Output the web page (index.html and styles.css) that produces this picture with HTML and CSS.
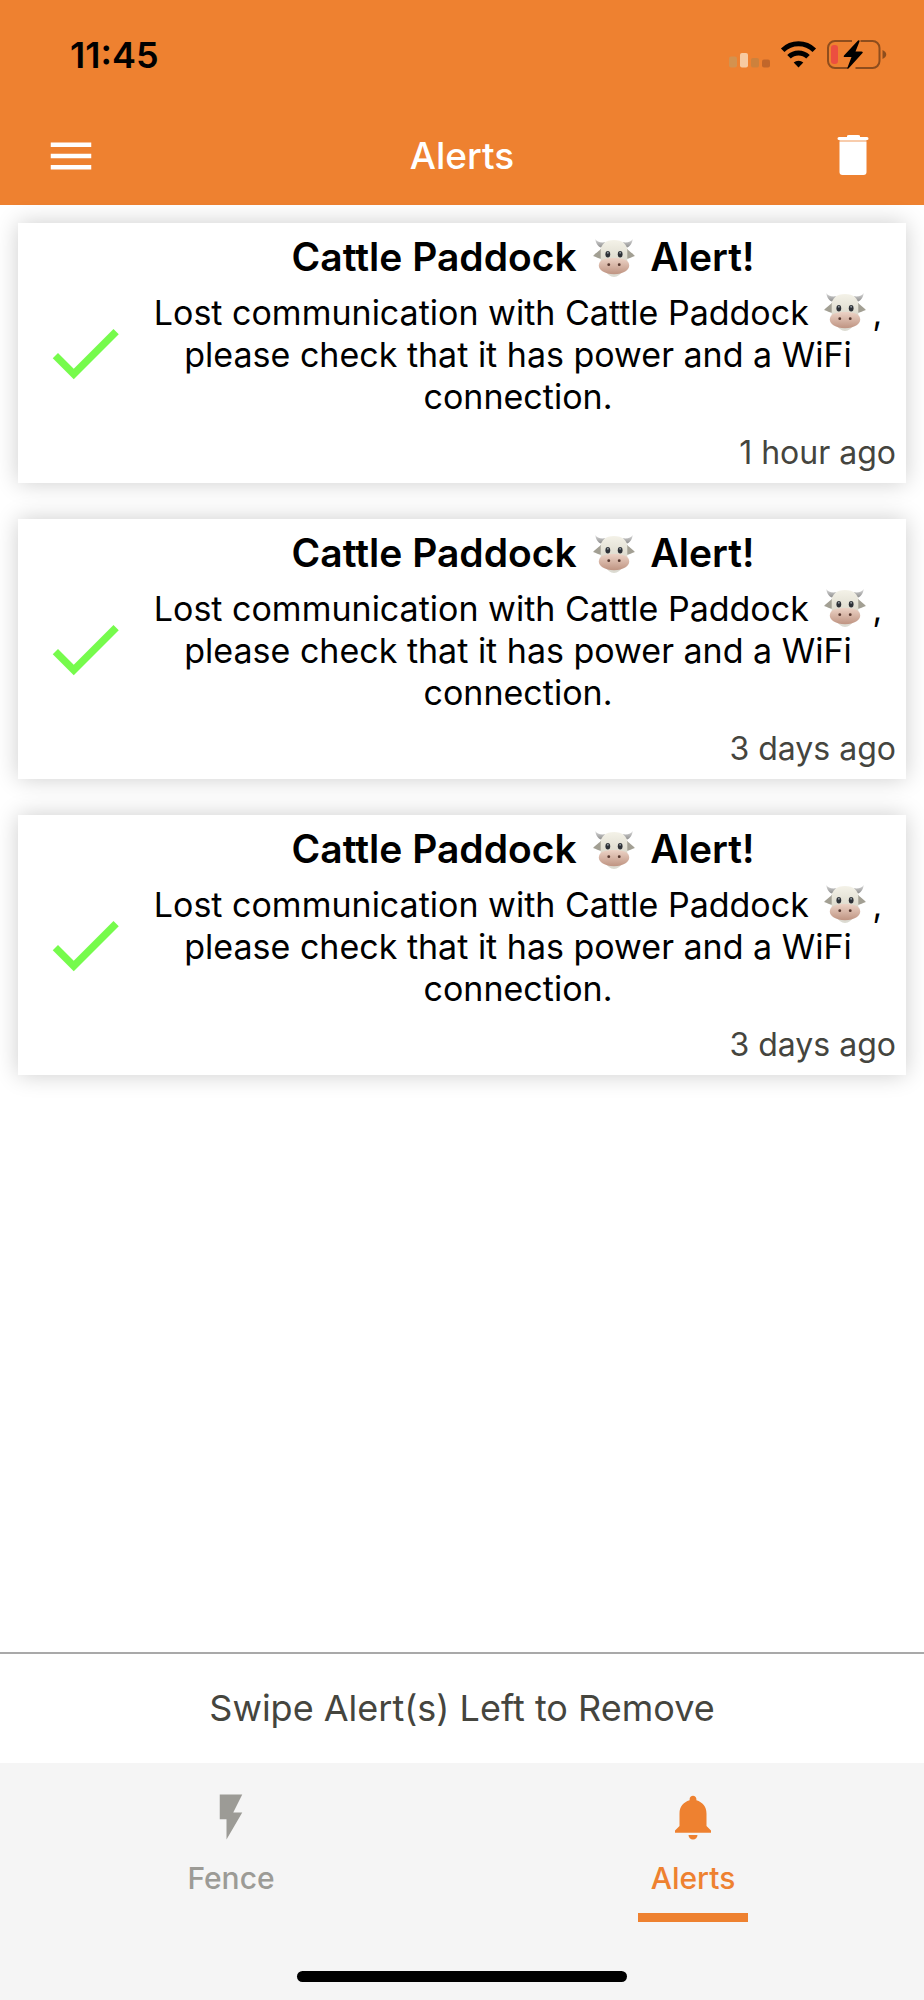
FILE: index.html
```
<!DOCTYPE html>
<html lang="en">
<head>
    <meta charset="UTF-8">
    <meta name="viewport" content="width=device-width, initial-scale=1.0">
    <title>Alerts</title>
    <link rel="stylesheet" href="styles.css">
</head>
<body>

<!-- Shared icons -->
<svg class="sprite" aria-hidden="true">
    <defs>
        <linearGradient id="cowFace" x1="0" y1="0" x2="0" y2="1">
            <stop offset="0" stop-color="#f4f2e8"/>
            <stop offset="1" stop-color="#dcd9cc"/>
        </linearGradient>
        <linearGradient id="cowNose" x1="0" y1="0" x2="0" y2="1">
            <stop offset="0" stop-color="#ecd3c6"/>
            <stop offset="1" stop-color="#bf9482"/>
        </linearGradient>
        <linearGradient id="cowHorn" x1="0" y1="0" x2="0" y2="1">
            <stop offset="0" stop-color="#dadada"/>
            <stop offset="1" stop-color="#8e8e8e"/>
        </linearGradient>
    </defs>
    <symbol id="cow" viewBox="0 0 44 40">
        <path d="M2.500 0c1 3 5 4 10 3.500l1 3L8 9C5 7.500 2.500 4 2.500 0z" fill="url(#cowHorn)"/>
        <path d="M41.500 0c-1 3-5 4-10 3.500l-1 3L36 9c3-1.500 5.500-5 5.500-9z" fill="url(#cowHorn)"/>
        <path d="M9 9C7 13 3 14 0 18c3 1 6 3 9 3z" fill="#a29f93"/>
        <path d="M35 9c2 4 6 5 9 9-3 1-6 3-9 3z" fill="#a29f93"/>
        <path d="M13 33q3 7 9 7t9-7z" fill="#dcdbd2"/>
        <path d="M22 1C13 1 8 6 8 12v12h28V12C36 6 31 1 22 1z" fill="url(#cowFace)"/>
        <ellipse cx="15.500" cy="16" rx="2.500" ry="3.500" fill="#2c3036"/>
        <ellipse cx="28.500" cy="16" rx="2.500" ry="3.500" fill="#2c3036"/>
        <circle cx="15.500" cy="14.500" r="1" fill="#8f979c"/>
        <circle cx="28.500" cy="14.500" r="1" fill="#8f979c"/>
        <path d="M22 20c-10 0-16 2-16 8 0 5 6 9 16 9s16-4 16-9c0-6-6-8-16-8z" fill="url(#cowNose)"/>
        <circle cx="16.500" cy="27" r="1.500" fill="#57382f"/>
        <circle cx="27.500" cy="27" r="1.500" fill="#57382f"/>
    </symbol>
    <symbol id="check" viewBox="0 0 24 24">
        <path d="M9 16.200L4.800 12l-1.400 1.400L9 19 21 7l-1.400-1.400L9 16.200z"/>
    </symbol>
</svg>

<header class="header">
    <div class="status-bar">
        <span class="clock">11:45</span>
        <svg class="status-icons" viewBox="0 0 160 32" aria-hidden="true">
            <rect x="1" y="17.500" width="8" height="11" rx="2" fill="#d3924f"/>
            <rect x="12" y="14" width="8" height="14.500" rx="2" fill="#f7cba2"/>
            <rect x="23" y="19" width="8" height="9.500" rx="2" fill="#cd813c"/>
            <rect x="34" y="20.500" width="8" height="8" rx="2" fill="#c1662a"/>
            <g fill="none" stroke="#000" stroke-width="5">
                <path d="M54.700 11.200a22.500 22.500 0 0 1 31.600 0"/>
                <path d="M61 17.800a13.500 13.500 0 0 1 19 0"/>
            </g>
            <path d="M70.500 28.500l-4.800-4.900a7 7 0 0 1 9.600 0z" fill="#000"/>
            <path d="M124 2h-17a7 7 0 0 0-7 7v13a7 7 0 0 0 7 7h13M132.500 2h12a7 7 0 0 1 7 7v13a7 7 0 0 1-7 7h-17" fill="none" stroke="#8e4d1d" stroke-width="2"/>
            <path d="M154.500 11c5 2 5 7 0 9z" fill="#8e4d1d"/>
            <rect x="103" y="6" width="7" height="19" rx="3" fill="#ec4f40"/>
            <path d="M130 1.500l-14 15q-1 1.500 1 1.500h6.500l-4 10.500q-.5 2 1 1l14-15.500q1-1.500-1-1.500h-6l4-10q.3-2-1.500-1z" fill="#000"/>
        </svg>
    </div>
    <div class="nav-bar">
        <button class="icon-btn" type="button" aria-label="Menu">
            <svg viewBox="0 0 24 24"><path d="M3 18h18v-2H3v2zm0-5h18v-2H3v2zm0-7v2h18V6H3z"/></svg>
        </button>
        <h1>Alerts</h1>
        <button class="icon-btn" type="button" aria-label="Delete all">
            <svg viewBox="0 0 54 54">
                <path d="M21 7q0-1 2-1h9q2 0 2 1v1h7q1.500 0 1.500 1.500T41 11H13q-1.500 0-1.500-1.500T13 8h8z"/>
                <path d="M13.500 11h27v2h-27z" opacity=".6"/>
                <path d="M13.500 13h27v30q0 3-3 3h-21q-3 0-3-3z"/>
            </svg>
        </button>
    </div>
</header>

<main class="alerts">
    <article class="card">
        <svg class="check" role="img" aria-label="Resolved"><use href="#check"/></svg>
        <div class="card-body">
            <h2>Cattle Paddock <svg class="cow" role="img" aria-label="cow"><use href="#cow"/></svg> Alert!</h2>
            <p class="message">Lost communication with Cattle Paddock <svg class="cow" role="img" aria-label="cow"><use href="#cow"/></svg>, please check that it has power and a WiFi connection.</p>
            <p class="time">1 hour ago</p>
        </div>
    </article>

    <article class="card">
        <svg class="check" role="img" aria-label="Resolved"><use href="#check"/></svg>
        <div class="card-body">
            <h2>Cattle Paddock <svg class="cow" role="img" aria-label="cow"><use href="#cow"/></svg> Alert!</h2>
            <p class="message">Lost communication with Cattle Paddock <svg class="cow" role="img" aria-label="cow"><use href="#cow"/></svg>, please check that it has power and a WiFi connection.</p>
            <p class="time">3 days ago</p>
        </div>
    </article>

    <article class="card">
        <svg class="check" role="img" aria-label="Resolved"><use href="#check"/></svg>
        <div class="card-body">
            <h2>Cattle Paddock <svg class="cow" role="img" aria-label="cow"><use href="#cow"/></svg> Alert!</h2>
            <p class="message">Lost communication with Cattle Paddock <svg class="cow" role="img" aria-label="cow"><use href="#cow"/></svg>, please check that it has power and a WiFi connection.</p>
            <p class="time">3 days ago</p>
        </div>
    </article>
</main>

<p class="hint">Swipe Alert(s) Left to Remove</p>

<footer class="footer">
    <nav class="tabs">
        <a class="tab" href="#fence">
            <svg viewBox="0 0 24 24" aria-hidden="true"><path d="M7 2v11h3v9l7-12h-4l4-8z"/></svg>
            <span>Fence</span>
        </a>
        <a class="tab active" href="#alerts" aria-current="page">
            <svg viewBox="0 0 24 24" aria-hidden="true"><path d="M12 22c1.100 0 2-.9 2-2h-4c0 1.100.9 2 2 2zm6-6v-5.500c0-3-1.700-5.100-4.500-5.900V4c0-.83-.67-1.500-1.500-1.500s-1.500.67-1.500 1.500v.6C7.700 5.400 6 7.500 6 10.500V16l-2 2v1h16v-1l-2-2z"/></svg>
            <span>Alerts</span>
        </a>
    </nav>
    <div class="home-indicator"></div>
</footer>

</body>
</html>
```
FILE: styles.css
```
* {
    box-sizing: border-box;
}

body {
    font-family: Inter, "Liberation Sans", sans-serif;
    background-color: #fff;
    color: #000;
    margin: 0;
    min-height: 100vh;
    display: flex;
    flex-direction: column;
}

h1, h2, p {
    margin: 0;
}

.sprite {
    display: block;
    width: 0;
    height: 0;
}

/* Header */
.header {
    background-color: #ee8130;
    padding-bottom: 4px;
}

.status-bar {
    display: flex;
    justify-content: space-between;
    align-items: center;
    height: 110px;
    padding: 0 36px 0 70px;
}

.clock {
    font-size: 36px;
    font-weight: 600;
}

.status-icons {
    width: 160px;
    height: 32px;
}

.nav-bar {
    display: flex;
    justify-content: space-between;
    align-items: center;
    height: 91px;
    padding: 0 44px;
    color: #fff;
}

.nav-bar h1 {
    font-size: 37px;
    font-weight: 500;
}

.icon-btn {
    width: 54px;
    height: 54px;
    padding: 0;
    border: none;
    background: none;
    color: inherit;
    cursor: pointer;
}

.icon-btn svg {
    display: block;
    width: 100%;
    fill: currentColor;
}

/* Alert cards */
.alerts {
    flex: 1;
    display: flex;
    flex-direction: column;
    gap: 36px;
    padding: 18px;
}

.card {
    display: flex;
    align-items: center;
    gap: 10px;
    padding: 10px 0 10px 22px;
    background-color: #fff;
    box-shadow: 0 0 22px rgba(0, 0, 0, 0.2);
}

.check {
    flex: none;
    width: 90px;
    height: 90px;
    fill: #76fb4c;
}

.card-body {
    flex: 1;
    text-align: center;
}

.card h2 {
    font-size: 39px;
    font-weight: 600;
    line-height: 48px;
}

.message {
    margin: 11px 10px 15px 0;
    font-size: 34px;
    line-height: 42px;
}

.cow {
    width: 42px;
    height: 38px;
    margin: 0 6px;
    vertical-align: -6px;
}

.time {
    padding-right: 10px;
    text-align: right;
    font-size: 32px;
    line-height: 40px;
    color: #45453e;
}

/* Bottom area */
.hint {
    padding: 32px 18px 33px;
    border-top: 2px solid #a9a9a9;
    text-align: center;
    font-size: 36px;
    line-height: 44px;
    color: #45453e;
}

.footer {
    background-color: #f5f5f5;
    padding-bottom: 18px;
}

.tabs {
    display: flex;
}

.tab {
    flex: 1;
    display: flex;
    flex-direction: column;
    align-items: center;
    padding-top: 27px;
    color: #9c9b96;
    font-size: 30px;
    font-weight: 500;
    line-height: 40px;
    text-decoration: none;
}

.tab svg {
    width: 54px;
    height: 54px;
    margin-bottom: 14px;
    fill: currentColor;
}

.tab span {
    padding: 0 13px 15px;
    border-bottom: 9px solid transparent;
}

.tab.active {
    color: #ee8130;
}

.tab.active span {
    border-color: #ee8130;
}

.home-indicator {
    width: 330px;
    height: 11px;
    margin: 49px auto 0;
    border-radius: 6px;
    background-color: #000;
}
```
